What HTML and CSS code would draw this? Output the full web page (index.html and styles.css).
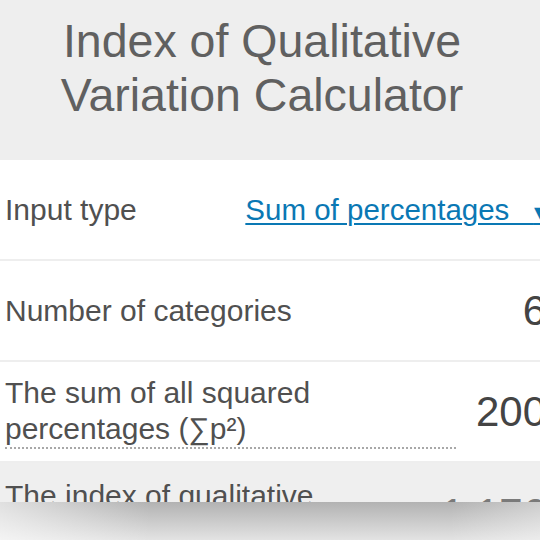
FILE: index.html
```html
<!DOCTYPE html>
<html lang="en">
<head>
    <meta charset="UTF-8">
    <meta name="viewport" content="width=device-width, initial-scale=1.0">
    <title>Index of Qualitative Variation Calculator</title>
    <link rel="stylesheet" href="styles.css">
</head>
<body>
    <div class="calculator">
        <div class="header">
            <h1 class="title">Index of Qualitative Variation Calculator</h1>
        </div>
        <div class="row">
            <div class="label">Input type</div>
            <a class="select" href="#">Sum of percentages&nbsp;&nbsp;&nbsp;<span class="arrow">&#9662;</span></a>
        </div>
        <div class="row">
            <div class="label">Number of categories</div>
            <div class="value">6</div>
        </div>
        <div class="row">
            <div class="label dotted">The sum of all squared percentages (&sum;p&sup2;)</div>
            <div class="value">200</div>
        </div>
        <div class="row result">
            <div class="label">The index of qualitative variation (IQV)</div>
            <div class="value">1.176</div>
        </div>
    </div>
    <div class="shade"></div>
</body>
</html>
```

FILE: styles.css
```css
body {
    margin: 0;
    background: #ffffff;
    font-family: 'Liberation Sans', Arial, sans-serif;
    overflow: hidden;
}

.calculator {
    width: 552px;
    height: 502px;
    overflow: hidden;
    background: #ffffff;
}

/* soft shadow under the card */
.shade {
    height: 38px;
    background:
        linear-gradient(to right, rgba(255, 255, 255, 0.6), rgba(255, 255, 255, 0) 150px),
        linear-gradient(to left, rgba(255, 255, 255, 0.35), rgba(255, 255, 255, 0) 90px),
        linear-gradient(to bottom, #b2b2b2, #e3e3e3);
}

.header {
    background: #eeeeee;
    height: 160px;
    box-sizing: border-box;
    padding: 14px 28px 0 0;
}

.title {
    margin: 0;
    font-size: 46.5px;
    line-height: 54px;
    font-weight: normal;
    color: #606060;
    text-align: center;
}

.row {
    display: flex;
    align-items: center;
    height: 101px;
    box-sizing: border-box;
    padding: 0 6px 0 5px;
    border-bottom: 2px solid #eeeeee;
}

.row.result {
    background: #efefef;
    border-bottom: none;
}

.label {
    flex: 1;
    min-width: 0;
    font-size: 30px;
    line-height: 36px;
    color: #505050;
}

.label.dotted {
    border-bottom: 2px dotted #a8a8a8;
}

.value {
    margin-left: 20px;
    font-size: 42px;
    color: #444444;
}

.result .value {
    color: #7a7a7a;
}

.select {
    font-size: 29.5px;
    color: #0a78b4;
    text-decoration: underline;
    text-decoration-thickness: 2px;
    text-underline-offset: 3px;
}

.arrow {
    font-family: 'DejaVu Sans', sans-serif;
    font-size: 24px;
}
```
